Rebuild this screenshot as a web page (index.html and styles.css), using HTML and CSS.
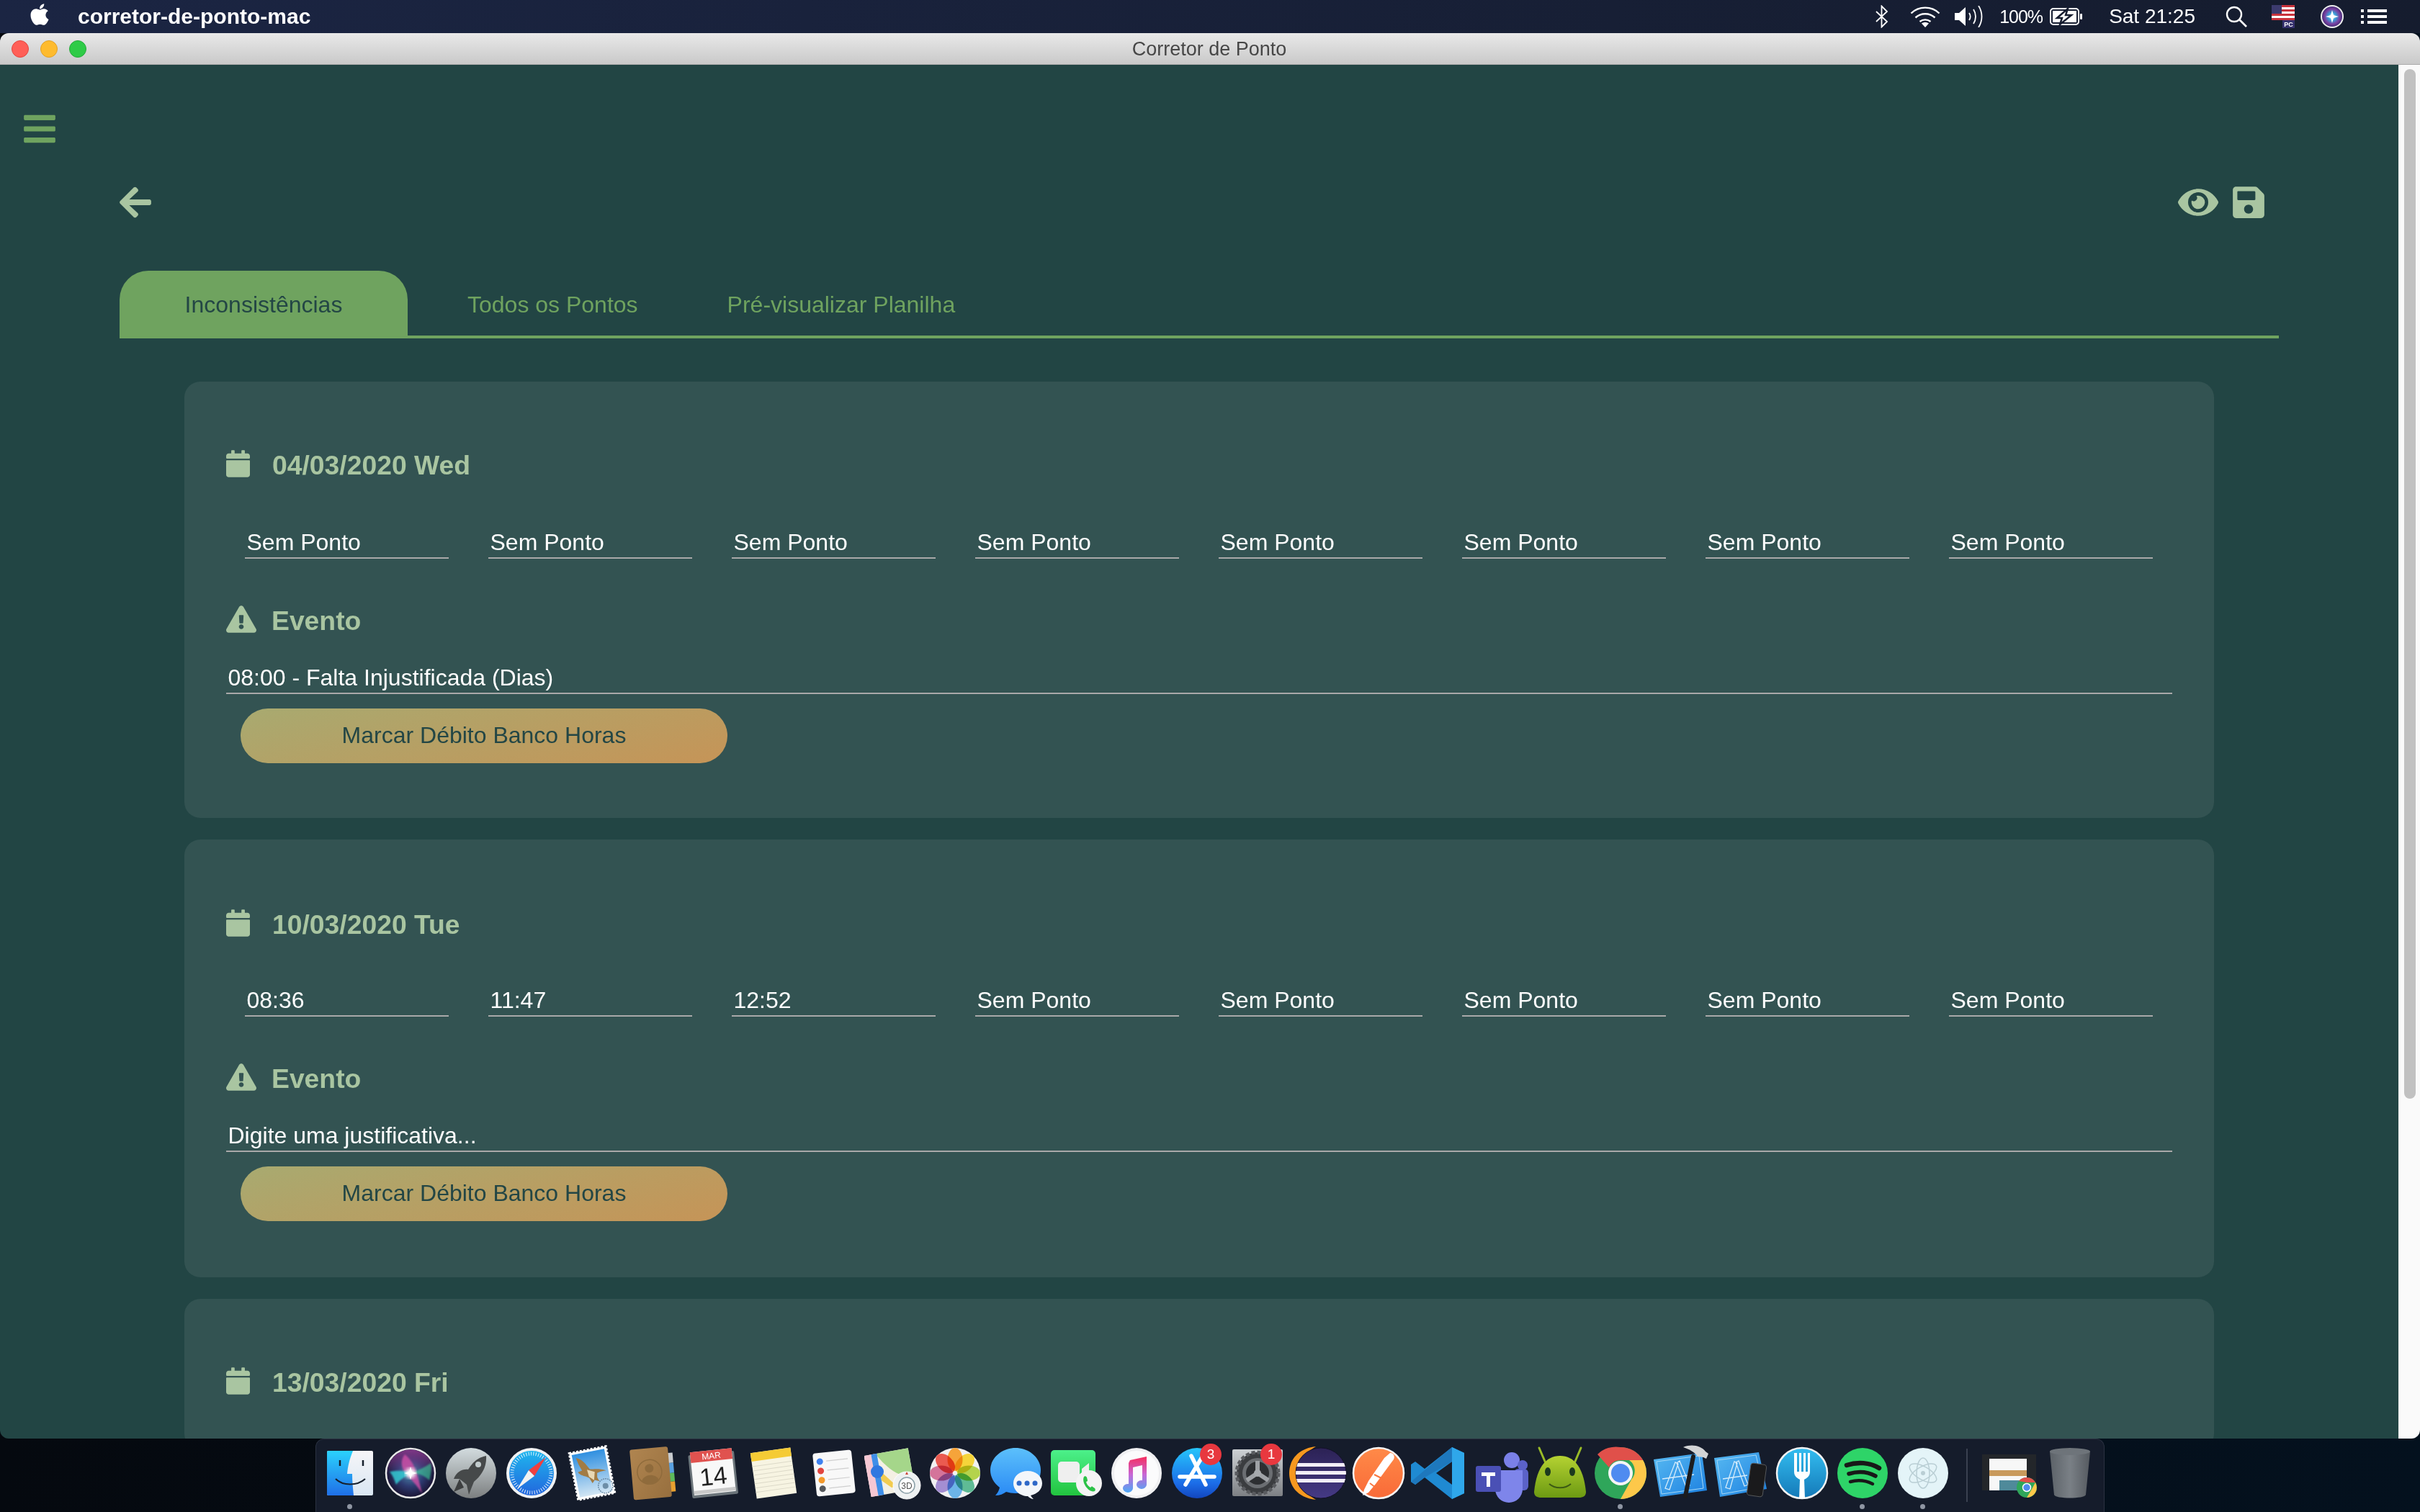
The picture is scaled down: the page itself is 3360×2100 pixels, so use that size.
FILE: index.html
```html
<!DOCTYPE html>
<html lang="pt">
<head>
<meta charset="utf-8">
<title>Corretor de Ponto</title>
<link rel="stylesheet" href="styles.css">
</head>
<body>
<header class="menubar">
  <svg class="mi apple" viewBox="0 0 384 512"><path fill="#fff" d="M318.7 268.7c-.2-36.7 16.4-64.4 50-84.8-18.8-26.9-47.2-41.7-84.7-44.6-35.5-2.8-74.3 20.7-88.5 20.7-15 0-49.4-19.7-76.4-19.7C63.3 141.2 4 184.8 4 273.5q0 39.3 14.4 81.2c12.8 36.7 59 126.7 107.2 125.2 25.2-.6 43-17.9 75.8-17.9 31.8 0 48.3 17.9 76.4 17.9 48.6-.7 90.4-82.5 102.6-119.3-65.2-30.7-61.7-90-61.7-91.9zm-56.6-164.2c27.3-32.4 24.8-61.9 24-72.5-24.1 1.4-52 16.4-67.9 34.9-17.5 19.8-27.8 44.3-25.6 71.9 26.1 2 49.9-11.4 69.5-34.3z"/></svg>
  <span class="appname">corretor-de-ponto-mac</span>
  <div class="status">
    <svg class="mi bt" viewBox="0 0 18 32"><path fill="none" stroke="#fff" stroke-width="1.800" d="M1 9l15 14-7.500 7.500V1.500L16 9 1 23"/></svg>
    <svg class="mi wifi" viewBox="0 0 42 30"><g fill="none" stroke="#fff" stroke-width="2.400"><path d="M1.500 10.500C12 0 30 0 40.500 10.500"/><path d="M7.500 16.500C15 9.500 27 9.500 34.500 16.500"/><path d="M13.500 22C18 18.500 24 18.500 28.500 22"/></g><path fill="#fff" d="M21 30l-5-5.500c3-2 7-2 10 0z"/></svg>
    <svg class="mi spk" viewBox="0 0 41 30"><path fill="#fff" d="M0 10h6l9-8v26l-9-8H0z"/><g fill="none" stroke="#fff" stroke-width="1.800"><path d="M20 10c2 3 2 7 0 10"/><path d="M26 5c4 6 4 14 0 20"/><path d="M33 0c6 9 6 21 0 30"/></g></svg>
    <span class="pct">100%</span>
    <svg class="mi batt" viewBox="0 0 46 24"><rect x="1" y="1" width="39" height="22" rx="4" fill="none" stroke="#fff" stroke-width="2"/><rect x="42" y="8" width="3" height="8" rx="1" fill="#fff"/><rect x="4" y="4" width="33" height="16" fill="#fff"/><path fill="#fff" d="M25 1L10 14h7l-3 9L30 10h-8z" stroke="#161d30" stroke-width="2.500"/></svg>
    <span class="clock">Sat 21:25</span>
    <svg class="mi search" viewBox="0 0 30 30"><circle cx="12" cy="12" r="10" fill="none" stroke="#fff" stroke-width="2.400"/><path d="M19 19l10 10" stroke="#fff" stroke-width="2.600"/></svg>
    <svg class="mi flag" viewBox="0 0 32 32"><rect width="32" height="21" fill="#fff"/><g fill="#c8323c"><rect width="32" height="3"/><rect y="6" width="32" height="3"/><rect y="12" width="32" height="3"/><rect y="18" width="32" height="3"/></g><rect width="14" height="12" fill="#3c3b6e"/><rect x="15" y="21" width="17" height="11" fill="#35316d"/><text x="23.500" y="30" class="pc">PC</text></svg>
    <svg class="mi siri" viewBox="0 0 32 32"><defs><radialGradient id="sr"><stop offset="0" stop-color="#dff"/><stop offset=".35" stop-color="#3aa0d8"/><stop offset=".7" stop-color="#7a3fa0"/><stop offset="1" stop-color="#3a2a70"/></radialGradient></defs><circle cx="16" cy="16" r="15" fill="url(#sr)" stroke="#eee" stroke-width="2"/><path d="M16 7l2 7 7 2-7 2-2 7-2-7-7-2 7-2z" fill="#fff"/></svg>
    <svg class="mi list" viewBox="0 0 36 20"><g fill="#fff"><rect width="4" height="4"/><rect y="8" width="4" height="4"/><rect y="16" width="4" height="4"/><rect x="9" width="27" height="4"/><rect x="9" y="8" width="27" height="4"/><rect x="9" y="16" width="27" height="4"/></g></svg>
  </div>
</header>

<section class="window">
  <div class="titlebar">
    <div class="lights"><i class="light red"></i><i class="light yellow"></i><i class="light green"></i></div>
    <div class="wintitle">Corretor de Ponto</div>
  </div>
  <div class="winbody">
    <main class="main">
      <svg class="bars" viewBox="0 0 448 512"><path d="M16 132h416c8.837 0 16-7.163 16-16V76c0-8.837-7.163-16-16-16H16C7.163 60 0 67.163 0 76v40c0 8.837 7.163 16 16 16zm0 160h416c8.837 0 16-7.163 16-16v-40c0-8.837-7.163-16-16-16H16c-8.837 0-16 7.163-16 16v40c0 8.837 7.163 16 16 16zm0 160h416c8.837 0 16-7.163 16-16v-40c0-8.837-7.163-16-16-16H16c-8.837 0-16 7.163-16 16v40c0 8.837 7.163 16 16 16z"/></svg>
      <div class="page">
        <div class="toolbar">
          <svg class="tool" viewBox="0 0 448 512"><path d="M257.500 445.100l-22.200 22.200c-9.400 9.400-24.600 9.400-33.900 0L7 273c-9.400-9.400-9.400-24.600 0-33.900L201.400 44.700c9.400-9.400 24.600-9.400 33.900 0l22.200 22.200c9.500 9.500 9.300 25-.4 34.300L136.600 216H424c13.300 0 24 10.700 24 24v32c0 13.300-10.700 24-24 24H136.600l120.500 114.800c9.800 9.300 10 24.800.4 34.300z"/></svg>
          <div class="tools">
            <svg class="tool eye" viewBox="0 0 576 512"><path d="M572.520 241.400C518.290 135.590 410.930 64 288 64S57.680 135.640 3.480 241.410a32.350 32.350 0 0 0 0 29.190C57.710 376.410 165.070 448 288 448s230.320-71.640 284.520-177.410a32.350 32.350 0 0 0 0-29.190zM288 400a144 144 0 1 1 144-144 143.930 143.930 0 0 1-144 144zm0-240a95.310 95.310 0 0 0-25.310 3.790 47.850 47.850 0 0 1-66.900 66.900A95.780 95.780 0 1 0 288 160z"/></svg>
            <svg class="tool" viewBox="0 0 448 512"><path d="M433.941 129.941l-83.882-83.882A48 48 0 0 0 316.118 32H48C21.490 32 0 53.490 0 80v352c0 26.510 21.490 48 48 48h352c26.510 0 48-21.490 48-48V163.882a48 48 0 0 0-14.059-33.941zM224 416c-35.346 0-64-28.654-64-64 0-35.346 28.654-64 64-64s64 28.654 64 64c0 35.346-28.654 64-64 64zm96-304.520V212c0 6.627-5.373 12-12 12H76c-6.627 0-12-5.373-12-12V108c0-6.627 5.373-12 12-12h228.520c3.183 0 6.235 1.264 8.485 3.515l3.480 3.480A11.996 11.996 0 0 1 320 111.480z"/></svg>
          </div>
        </div>
        <nav class="tabs">
          <div class="tab active">Inconsistências</div>
          <div class="tab second">Todos os Pontos</div>
          <div class="tab">Pré-visualizar Planilha</div>
        </nav>
        <div class="cards">
          <article class="card">
            <h2 class="head"><svg class="cal" viewBox="0 0 448 512"><path d="M12 192h424c6.600 0 12 5.400 12 12v260c0 26.500-21.500 48-48 48H48c-26.500 0-48-21.500-48-48V204c0-6.600 5.400-12 12-12zm436-44v-36c0-26.500-21.500-48-48-48h-48V12c0-6.600-5.400-12-12-12h-40c-6.600 0-12 5.400-12 12v52H160V12c0-6.600-5.400-12-12-12h-40c-6.600 0-12 5.400-12 12v52H48C21.500 64 0 85.500 0 112v36c0 6.600 5.400 12 12 12h424c6.600 0 12-5.400 12-12z"/></svg><span>04/03/2020 Wed</span></h2>
            <div class="times"><div class="field">Sem Ponto</div><div class="field">Sem Ponto</div><div class="field">Sem Ponto</div><div class="field">Sem Ponto</div><div class="field">Sem Ponto</div><div class="field">Sem Ponto</div><div class="field">Sem Ponto</div><div class="field">Sem Ponto</div></div>
            <h3 class="head event"><svg class="warn" viewBox="0 0 576 512"><path d="M569.517 440.013C587.975 472.007 564.806 512 527.940 512H48.054c-36.937 0-59.999-40.055-41.577-71.987L246.423 24.035c18.467-32.009 64.720-31.951 83.154 0l239.940 416zM288 354c-25.405 0-46 20.595-46 46s20.595 46 46 46 46-20.595 46-46-20.595-46-46-46zm-43.673-165.346l7.418 136c.347 6.364 5.609 11.346 11.982 11.346h48.546c6.373 0 11.635-4.982 11.982-11.346l7.418-136c.375-6.874-5.098-12.654-11.982-12.654h-63.383c-6.884 0-12.356 5.780-11.981 12.654z"/></svg><span>Evento</span></h3>
            <div class="field reason">08:00 - Falta Injustificada (Dias)</div>
            <button class="action">Marcar Débito Banco Horas</button>
          </article>
          <article class="card tall">
            <h2 class="head"><svg class="cal" viewBox="0 0 448 512"><path d="M12 192h424c6.600 0 12 5.400 12 12v260c0 26.500-21.500 48-48 48H48c-26.500 0-48-21.500-48-48V204c0-6.600 5.400-12 12-12zm436-44v-36c0-26.500-21.500-48-48-48h-48V12c0-6.600-5.400-12-12-12h-40c-6.600 0-12 5.400-12 12v52H160V12c0-6.600-5.400-12-12-12h-40c-6.600 0-12 5.400-12 12v52H48C21.500 64 0 85.500 0 112v36c0 6.600 5.400 12 12 12h424c6.600 0 12-5.400 12-12z"/></svg><span>10/03/2020 Tue</span></h2>
            <div class="times"><div class="field">08:36</div><div class="field">11:47</div><div class="field">12:52</div><div class="field">Sem Ponto</div><div class="field">Sem Ponto</div><div class="field">Sem Ponto</div><div class="field">Sem Ponto</div><div class="field">Sem Ponto</div></div>
            <h3 class="head event"><svg class="warn" viewBox="0 0 576 512"><path d="M569.517 440.013C587.975 472.007 564.806 512 527.940 512H48.054c-36.937 0-59.999-40.055-41.577-71.987L246.423 24.035c18.467-32.009 64.720-31.951 83.154 0l239.940 416zM288 354c-25.405 0-46 20.595-46 46s20.595 46 46 46 46-20.595 46-46-20.595-46-46-46zm-43.673-165.346l7.418 136c.347 6.364 5.609 11.346 11.982 11.346h48.546c6.373 0 11.635-4.982 11.982-11.346l7.418-136c.375-6.874-5.098-12.654-11.982-12.654h-63.383c-6.884 0-12.356 5.780-11.981 12.654z"/></svg><span>Evento</span></h3>
            <div class="field reason">Digite uma justificativa...</div>
            <button class="action">Marcar Débito Banco Horas</button>
          </article>
          <article class="card">
            <h2 class="head"><svg class="cal" viewBox="0 0 448 512"><path d="M12 192h424c6.600 0 12 5.400 12 12v260c0 26.500-21.500 48-48 48H48c-26.500 0-48-21.500-48-48V204c0-6.600 5.400-12 12-12zm436-44v-36c0-26.500-21.500-48-48-48h-48V12c0-6.600-5.400-12-12-12h-40c-6.600 0-12 5.400-12 12v52H160V12c0-6.600-5.400-12-12-12h-40c-6.600 0-12 5.400-12 12v52H48C21.500 64 0 85.500 0 112v36c0 6.600 5.400 12 12 12h424c6.600 0 12-5.400 12-12z"/></svg><span>13/03/2020 Fri</span></h2>
          </article>
        </div>
      </div>
    </main>
    <div class="scrollbar"><div class="thumb"></div></div>
  </div>
</section>

<footer class="dockrow">
  <div class="dock">
    <div class="cell"><svg class="ic" viewBox="0 0 84 84"><defs><linearGradient id="f1" x1="0" y1="0" x2="0" y2="1"><stop offset="0" stop-color="#2bd2fc"/><stop offset="1" stop-color="#1f6fe8"/></linearGradient><linearGradient id="f2" x1="0" y1="0" x2="0" y2="1"><stop offset="0" stop-color="#f6f6f8"/><stop offset="1" stop-color="#d9e6f3"/></linearGradient></defs><rect x="10" y="11" width="64" height="62" rx="2" fill="url(#f2)"/><path d="M12 11h34c-4 10-7 20-8 32h7c0 10 1 20 2 30H12a2 2 0 0 1-2-2V13a2 2 0 0 1 2-2z" fill="url(#f1)"/><path d="M28 24v8M60 24v8" stroke="#17202c" stroke-width="2.500"/><path d="M22 50c10 10 30 10 41 0" fill="none" stroke="#17202c" stroke-width="2.200"/></svg><i class="dot"></i></div>
    <div class="cell"><svg class="ic" viewBox="0 0 84 84"><defs><radialGradient id="s1"><stop offset="0" stop-color="#4f8fb0"/><stop offset=".55" stop-color="#2d3a70"/><stop offset="1" stop-color="#1a1433"/></radialGradient><linearGradient id="s2" x1="0" y1="0" x2="0" y2="1"><stop offset="0" stop-color="#8a3a8f" stop-opacity=".9"/><stop offset=".5" stop-color="#8a3a8f" stop-opacity="0"/></linearGradient><filter id="sb"><feGaussianBlur stdDeviation="1"/></filter><filter id="sc"><feGaussianBlur stdDeviation="2.500"/></filter></defs><circle cx="42" cy="42" r="34" fill="url(#s1)" stroke="#e8e8e8" stroke-width="2.500"/><circle cx="42" cy="42" r="32.500" fill="url(#s2)"/><g filter="url(#sb)"><path d="M34 16c8 6 14 16 18 30l6 24c-8-12-14-18-22-26-8-10-8-20-2-28z" fill="#d24fa8" opacity=".8"/><path d="M13 40c12-2 22-2 31 2-8 4-16 8-22 16-2-6-4-12-9-18z" fill="#33d3d8" opacity=".8"/><path d="M70 28c-8 6-18 10-26 14 10 0 18 4 24 10 2-8 4-16 2-24z" fill="#3fdf9f" opacity=".55"/></g><circle cx="42" cy="42" r="7" fill="#fff" filter="url(#sc)"/><path d="M42 33l2 7 7 2-7 2-2 7-2-7-7-2 7-2z" fill="#fff"/></svg></div>
    <div class="cell"><svg class="ic" viewBox="0 0 84 84"><defs><linearGradient id="l1" x1="0" y1="0" x2="0" y2="1"><stop offset="0" stop-color="#d3dcdf"/><stop offset="1" stop-color="#7c7f80"/></linearGradient></defs><circle cx="42" cy="42" r="35" fill="url(#l1)"/><path d="M63 18c1 14-5 26-17 36l-4 10-3 8-3-14-10-8-8 0c4-10 12-14 20-13 6-10 14-17 25-19z" fill="#46494a"/><circle cx="52" cy="30" r="4" fill="#c2cbcd"/><path d="M26 50l-8 18 14-6z" fill="#3d3f40"/></svg></div>
    <div class="cell"><svg class="ic" viewBox="0 0 84 84"><defs><linearGradient id="sf" x1="0" y1="0" x2="0" y2="1"><stop offset="0" stop-color="#1fb6ee"/><stop offset="1" stop-color="#2266dd"/></linearGradient></defs><circle cx="42" cy="42" r="35" fill="#f1f2f3"/><circle cx="42" cy="42" r="31" fill="url(#sf)"/><circle cx="42" cy="42" r="27" fill="none" stroke="#fff" stroke-width="5" stroke-dasharray="1 2.400" opacity=".85"/><path d="M62 20L38 38l8 8z" fill="#f04040"/><path d="M22 64l24-18-8-8z" fill="#f2f2f2"/></svg></div>
    <div class="cell"><svg class="ic" viewBox="0 0 84 84"><defs><linearGradient id="m1" x1="0" y1="0" x2="0" y2="1"><stop offset="0" stop-color="#2f8fe0"/><stop offset="1" stop-color="#d2e6f4"/></linearGradient></defs><g transform="rotate(-11 42 42)"><rect x="16" y="9" width="52" height="66" fill="#fff" stroke="#fff" stroke-width="3" stroke-dasharray="3 2"/><rect x="19" y="12" width="46" height="60" fill="url(#m1)"/><path d="M24 17c5 2 8 5 11 10l5 9c5 1 13 1 22 6-6 0-10 0-13 1l-1 6 2 6-6-3-4 4-3-8-4-3c-5-2-9-5-10-8l6-1-3-9z" fill="#a27c45"/><path d="M36 36l10 5-3 11-6-6z" fill="#e8d8b4"/><circle cx="57" cy="63" r="10" fill="none" stroke="#6d8ea8" stroke-width="1.500" stroke-dasharray="2 1"/><circle cx="57" cy="63" r="4" fill="#6d8ea8"/></g></svg></div>
    <div class="cell"><svg class="ic" viewBox="0 0 84 84"><defs><linearGradient id="c1" x1="0" y1="0" x2="1" y2="1"><stop offset="0" stop-color="#b08550"/><stop offset="1" stop-color="#976f3e"/></linearGradient></defs><g transform="rotate(-5 42 42)"><rect x="62" y="16" width="10" height="14" fill="#c9ccd0"/><rect x="62" y="30" width="10" height="14" fill="#5aa0e0"/><rect x="62" y="44" width="10" height="12" fill="#5cba5c"/><rect x="62" y="56" width="10" height="14" fill="#e8a030"/><rect x="13" y="7" width="53" height="70" rx="3" fill="url(#c1)"/><circle cx="38" cy="40" r="17" fill="none" stroke="#8f6b3c" stroke-width="1.500"/><circle cx="38" cy="35" r="6" fill="#8f6b3c"/><path d="M26 52c4-10 20-10 24 0-7 6-17 6-24 0z" fill="#8f6b3c"/></g></svg></div>
    <div class="cell"><svg class="ic" viewBox="0 0 84 84"><g transform="rotate(-6 42 42)"><rect x="10" y="14" width="64" height="60" rx="2" fill="#6b747a"/><rect x="13" y="10" width="58" height="60" fill="#f8f8f8"/><rect x="13" y="10" width="58" height="15" fill="#e0524f"/><text x="42" y="22" class="cal-mon">MAR</text><text x="42" y="58" class="cal-day">14</text><rect x="13" y="64" width="58" height="5" fill="#c9c9c9"/></g></svg></div>
    <div class="cell"><svg class="ic" viewBox="0 0 84 84"><g transform="rotate(-8 42 42)"><rect x="14" y="10" width="56" height="64" fill="#f7f4e2"/><rect x="14" y="10" width="56" height="12" fill="#f5cb35"/><g stroke="#dcd9c8" stroke-width="1"><path d="M14 29h56M14 35h56M14 41h56M14 47h56M14 53h56M14 59h56M14 65h56"/></g></g></svg></div>
    <div class="cell"><svg class="ic" viewBox="0 0 84 84"><g transform="rotate(-6 42 42)"><rect x="15" y="12" width="54" height="60" rx="4" fill="#f8f8f8"/><circle cx="24" cy="24" r="4.500" fill="#3f82f0"/><circle cx="24" cy="37" r="4.500" fill="#e2453f"/><circle cx="24" cy="50" r="4.500" fill="#f49a2c"/><circle cx="24" cy="62" r="4.500" fill="#55585c"/><path d="M33 24h30M33 37h30M33 50h30M33 62h30" stroke="#cfcfcf" stroke-width="1.200"/></g></svg></div>
    <div class="cell"><svg class="ic" viewBox="0 0 84 84"><g transform="rotate(-10 36 40)"><rect x="4" y="12" width="62" height="58" fill="#f4f0e4"/><path d="M20 12h46v40c-20-2-34-18-46-40z" fill="#a5d68a"/><path d="M4 12h14v58H4z" fill="#f6c7d3"/><path d="M14 12h8v58h-8z" fill="#3f8fe8"/><path d="M22 36l20 26h-8L22 50z" fill="#f2cc50"/></g><circle cx="18" cy="40" r="9" fill="#2f78e0"/><circle cx="59" cy="59" r="19" fill="#eef1f2" stroke="#fff"/><circle cx="59" cy="59" r="11" fill="#fff" stroke="#8ba0a8" stroke-width="1.500"/><text x="59" y="64" class="maps3d">3D</text><path d="M59 40l-2 4h4z" fill="#c43"/></svg></div>
    <div class="cell"><svg class="ic" viewBox="0 0 84 84"><circle cx="42" cy="42" r="35" fill="#f1f1f1"/><g class="petals"><ellipse cx="42" cy="23" rx="10.500" ry="16" fill="#f6a43a"/><ellipse cx="42" cy="23" rx="10.500" ry="16" fill="#f5d43a" transform="rotate(45 42 42)"/><ellipse cx="42" cy="23" rx="10.500" ry="16" fill="#b4d34c" transform="rotate(90 42 42)"/><ellipse cx="42" cy="23" rx="10.500" ry="16" fill="#5fbb95" transform="rotate(135 42 42)"/><ellipse cx="42" cy="23" rx="10.500" ry="16" fill="#6cb4e8" transform="rotate(180 42 42)"/><ellipse cx="42" cy="23" rx="10.500" ry="16" fill="#a48ed2" transform="rotate(225 42 42)"/><ellipse cx="42" cy="23" rx="10.500" ry="16" fill="#d4749a" transform="rotate(270 42 42)"/><ellipse cx="42" cy="23" rx="10.500" ry="16" fill="#ea5a50" transform="rotate(315 42 42)"/></g></svg></div>
    <div class="cell"><svg class="ic" viewBox="0 0 84 84"><defs><linearGradient id="ms" x1="0" y1="0" x2="0" y2="1"><stop offset="0" stop-color="#5cc0fb"/><stop offset="1" stop-color="#2a8af5"/></linearGradient></defs><path d="M42 7c19 0 35 14 35 31 0 18-16 32-35 32-5 0-9-1-13-2-4 3-9 5-15 5 3-3 5-7 6-11C12 56 7 47 7 38 7 21 23 7 42 7z" fill="url(#ms)"/><path d="M59 39c11 0 20 7 20 17 0 9-7 15-16 17 1 2 2 3 4 5-3 0-6-2-8-4-11 0-20-8-20-18 0-10 9-17 20-17z" fill="#f3f6fa"/><circle cx="47" cy="56" r="3.500" fill="#2f68c8"/><circle cx="58" cy="56" r="3.500" fill="#2f68c8"/><circle cx="69" cy="56" r="3.500" fill="#2f68c8"/></svg></div>
    <div class="cell"><svg class="ic" viewBox="0 0 84 84"><defs><linearGradient id="ft" x1="0" y1="0" x2="0" y2="1"><stop offset="0" stop-color="#4cf08a"/><stop offset="1" stop-color="#22c43f"/></linearGradient></defs><rect x="7" y="10" width="62" height="63" rx="5" fill="url(#ft)"/><rect x="17" y="26" width="30" height="29" rx="5" fill="#efefef"/><path d="M50 36l10-8v26l-10-8z" fill="#efefef"/><circle cx="60" cy="56" r="18" fill="#f4f4f4"/><path d="M53 47c1-1 3-1 4 1l1 4c0 1-1 2-2 2 1 4 3 6 6 8 1-1 2-2 3-1l3 2c1 1 1 3 0 4-8 3-19-12-15-20z" fill="#2cc247"/></svg></div>
    <div class="cell"><svg class="ic" viewBox="0 0 84 84"><defs><linearGradient id="it" x1="0" y1="0" x2="0" y2="1"><stop offset="0" stop-color="#f62d5e"/><stop offset=".5" stop-color="#c867d6"/><stop offset="1" stop-color="#4ca8f5"/></linearGradient></defs><circle cx="42" cy="42" r="35" fill="#f0f0f2"/><circle cx="42" cy="42" r="31" fill="#fbfbfc"/><path d="M33 24l23-5v39a7 6 0 1 1-6-6V31l-13 3v29a7 6 0 1 1-6-6V28z" fill="url(#it)"/></svg></div>
    <div class="cell"><svg class="ic" viewBox="0 0 84 84"><defs><linearGradient id="as" x1="0" y1="0" x2="0" y2="1"><stop offset="0" stop-color="#26c6fb"/><stop offset=".7" stop-color="#1c6de8"/><stop offset="1" stop-color="#1246bd"/></linearGradient></defs><circle cx="42" cy="42" r="35" fill="url(#as)"/><g stroke="#fff" stroke-width="5.500" stroke-linecap="round" fill="none"><path d="M50 18L26 58"/><path d="M34 18l20 40"/><path d="M18 47h48"/></g></svg><b class="badge">3</b></div>
    <div class="cell"><svg class="ic" viewBox="0 0 84 84"><defs><linearGradient id="sp" x1="0" y1="0" x2="0" y2="1"><stop offset="0" stop-color="#cdd1d4"/><stop offset="1" stop-color="#7d8084"/></linearGradient></defs><rect x="7" y="9" width="70" height="65" rx="2" fill="url(#sp)"/><circle cx="42" cy="42" r="29" fill="#3b3d40" stroke="#5a5c60" stroke-width="5" stroke-dasharray="5 3"/><circle cx="42" cy="42" r="21" fill="#6b6e72"/><circle cx="42" cy="42" r="16" fill="#2d2f32"/><path d="M42 42V25M42 42L27 52M42 42l15 10" stroke="#9fa2a6" stroke-width="6"/><circle cx="42" cy="42" r="5" fill="#a7aaae"/></svg><b class="badge">1</b></div>
    <div class="cell"><svg class="ic" viewBox="0 0 84 84"><defs><linearGradient id="ec" x1="0" y1="0" x2="0" y2="1"><stop offset="0" stop-color="#2c2255"/><stop offset="1" stop-color="#453a85"/></linearGradient><clipPath id="ecc"><circle cx="46" cy="42" r="35"/></clipPath></defs><path d="M39 5C12 8 2 26 2 42s10 34 37 37C24 70 16 58 16 42s8-28 23-37z" fill="#f6981f"/><circle cx="46" cy="42" r="35" fill="url(#ec)" stroke="#14102a" stroke-width="1"/><g clip-path="url(#ecc)" fill="#f2eef8"><rect x="10" y="28" width="72" height="5"/><rect x="10" y="39" width="72" height="5"/><rect x="10" y="50" width="72" height="5"/></g></svg></div>
    <div class="cell"><svg class="ic" viewBox="0 0 84 84"><defs><linearGradient id="pm" x1="0" y1="0" x2="0" y2="1"><stop offset="0" stop-color="#ff8a48"/><stop offset="1" stop-color="#f96a38"/></linearGradient></defs><circle cx="42" cy="42" r="35" fill="url(#pm)" stroke="#f6f6f6" stroke-width="2.500"/><path d="M58 14c5 0 7 5 5 9l-3 4-22 30-10 12-8 4 2-8 6-12 22-32z" fill="#fff"/><path d="M36 44l12 6M30 56l8 6" stroke="#f9753e" stroke-width="2"/></svg></div>
    <div class="cell"><svg class="ic" viewBox="0 0 84 84"><path d="M60 6l17 8v56l-17 8L22 48 9 58l-6-4v-24l6-4 13 10z" fill="#1f8ad2"/><path d="M60 6l17 8v56l-17 8z" fill="#2fa7ea"/><path d="M60 26L38 42l22 16z" fill="#151c2b"/><path d="M60 6v20L22 48 9 58l-6-4z" fill="#1e78bd"/></svg></div>
    <div class="cell"><svg class="ic" viewBox="0 0 84 84"><circle cx="59" cy="24" r="11" fill="#7a80e8"/><circle cx="74" cy="31" r="7" fill="#5b62c8"/><rect x="62" y="36" width="20" height="30" rx="6" fill="#5b62c8"/><path d="M36 38h38v26a19 19 0 0 1-38 0z" fill="#7e85ea"/><rect x="9" y="32" width="35" height="36" rx="3" fill="#4a50b5"/><path d="M17 41h19v5h-7v15h-5V46h-7z" fill="#fff"/></svg></div>
    <div class="cell"><svg class="ic" viewBox="0 0 84 84"><defs><linearGradient id="an" x1="0" y1="0" x2="0" y2="1"><stop offset="0" stop-color="#b5d232"/><stop offset="1" stop-color="#6c9a12"/></linearGradient></defs><path d="M22 28L13 7M62 28l9-21" stroke="#99bb27" stroke-width="3" stroke-linecap="round"/><path d="M42 18c22 0 33 20 36 50 0 6-4 8-10 8H16c-6 0-10-2-10-8 3-30 14-50 36-50z" fill="url(#an)"/><ellipse cx="25" cy="40" rx="4" ry="6" fill="#1c3a1e"/><ellipse cx="59" cy="40" rx="4" ry="6" fill="#1c3a1e"/><path d="M27 57c8 7 22 7 30 0" fill="none" stroke="#3c5a14" stroke-width="2"/></svg></div>
    <div class="cell"><svg class="ic" viewBox="0 0 84 84"><circle cx="42" cy="42" r="36" fill="#2fa65a"/><path d="M42 6a36 36 0 0 1 31.200 18H42a18 18 0 0 0-16 10L10 16A36 36 0 0 1 42 6z" fill="#e0504a"/><path d="M73.200 24A36 36 0 0 1 42 78l15-27a18 18 0 0 0-3-27z" fill="#fdc84a"/><circle cx="42" cy="42" r="17" fill="#f5f5f5"/><circle cx="42" cy="42" r="13" fill="#4f8bf0"/></svg><i class="dot"></i></div>
    <div class="cell"><svg class="ic" viewBox="0 0 84 84"><defs><linearGradient id="xc" x1="0" y1="0" x2="1" y2="1"><stop offset="0" stop-color="#58baf2"/><stop offset="1" stop-color="#1b7fe0"/></linearGradient></defs><path d="M4 23l67-9 7 52-65 9z" fill="url(#xc)"/><path d="M8 26l59-8 6 45-58 8z" fill="none" stroke="#a5d8f7" stroke-width="1"/><g fill="none" stroke="#d4ecfb" stroke-width="1.300"><path d="M20 63L34 27l4 2-12 36zM36 28l13 33 5-2-14-34zM16 50l44-6"/></g><path d="M59 19L48 74" stroke="#1c1c1e" stroke-width="6" stroke-linecap="round"/><path d="M45 6c12-5 25-2 31 6l4 3-3 7-4-2-8-1c-4-6-11-10-20-13z" fill="#d2d4d6"/></svg></div>
    <div class="cell"><svg class="ic" viewBox="0 0 84 84"><defs><linearGradient id="xd" x1="0" y1="0" x2="1" y2="1"><stop offset="0" stop-color="#58baf2"/><stop offset="1" stop-color="#1b7fe0"/></linearGradient></defs><path d="M4 21l62-8 11 51-65 11z" fill="url(#xd)"/><path d="M8 24l54-7 10 44-57 10z" fill="none" stroke="#a5d8f7" stroke-width="1"/><g fill="none" stroke="#d4ecfb" stroke-width="1.300"><path d="M20 62L32 26l4 2-10 36zM34 27l12 33 5-2-13-33zM16 50l34-5"/></g><rect x="52" y="29" width="22" height="45" rx="4" fill="#1a1a1c" stroke="#55575a" transform="rotate(8 63 52)"/></svg></div>
    <div class="cell"><svg class="ic" viewBox="0 0 84 84"><defs><linearGradient id="fk" x1="0" y1="0" x2="0" y2="1"><stop offset="0" stop-color="#33bdf0"/><stop offset="1" stop-color="#1479b8"/></linearGradient></defs><circle cx="42" cy="42" r="35" fill="url(#fk)" stroke="#f2f2f2" stroke-width="2.500"/><path d="M31 14v26c0 7 5 9 8 11l-1 26h8l-1-26c3-2 8-4 8-11V14h-3v26h-3V14h-3v26h-3V14h-3v26h-3V14z" fill="#fff"/></svg></div>
    <div class="cell"><svg class="ic" viewBox="0 0 84 84"><circle cx="42" cy="42" r="35" fill="#2ed468"/><g fill="none" stroke="#181818" stroke-linecap="round"><path d="M20 31c15-5 32-4 45 4" stroke-width="6.500"/><path d="M23 43c13-4 26-3 37 3" stroke-width="5.500"/><path d="M25 54c11-3 21-2 31 3" stroke-width="4.500"/></g></svg><i class="dot"></i></div>
    <div class="cell"><svg class="ic" viewBox="0 0 84 84"><circle cx="42" cy="42" r="35" fill="#e4f4f8"/><g fill="none" stroke="#b9ced4" stroke-width="1.500"><ellipse cx="42" cy="42" rx="21" ry="9" transform="rotate(30 42 42)"/><ellipse cx="42" cy="42" rx="21" ry="9" transform="rotate(90 42 42)"/><ellipse cx="42" cy="42" rx="21" ry="9" transform="rotate(150 42 42)"/></g><circle cx="42" cy="42" r="3" fill="#b9ced4"/></svg><i class="dot"></i></div>
    <div class="sep"></div>
    <div class="cell"><svg class="ic" viewBox="0 0 84 84"><rect x="4" y="16" width="75" height="50" fill="#23262a"/><rect x="14" y="22" width="52" height="44" fill="#f7f7f7"/><rect x="14" y="38" width="52" height="8" fill="#c99a5c"/><rect x="28" y="52" width="38" height="14" fill="#4f8a9a"/><circle cx="66" cy="62" r="14" fill="#2fa65a"/><path d="M66 48a14 14 0 0 1 12 7H66l-11-2a14 14 0 0 1 11-5z" fill="#e0504a"/><path d="M78 55a14 14 0 0 1-12 21l6-10z" fill="#fdc84a"/><circle cx="66" cy="62" r="5.500" fill="#4f8bf0" stroke="#fff" stroke-width="1.500"/></svg></div>
    <div class="cell"><svg class="ic" viewBox="0 0 84 84"><defs><linearGradient id="tr" x1="0" y1="0" x2="1" y2="0"><stop offset="0" stop-color="#5c6268"/><stop offset=".5" stop-color="#7a8086"/><stop offset="1" stop-color="#555a60"/></linearGradient></defs><path d="M14 12c0-4 56-4 56 0l-6 60c-1 6-43 6-44 0z" fill="url(#tr)"/><ellipse cx="42" cy="12" rx="28" ry="5" fill="#6e747a"/></svg></div>
  </div>
</footer>
</body>
</html>
```

FILE: styles.css
```css
* { box-sizing: border-box; }
html, body { margin: 0; padding: 0; }
body {
  width: 3360px;
  height: 2100px;
  overflow: hidden;
  display: flex;
  flex-direction: column;
  background: linear-gradient(90deg, #05090f, #04111e);
  font-family: "Liberation Sans", Arial, sans-serif;
}
svg { display: block; flex: none; }

/* menu bar */
.menubar {
  height: 46px;
  flex: none;
  display: flex;
  align-items: center;
  padding: 0 46px 0 42px;
  color: #fff;
  background: linear-gradient(90deg, #1b2543, #151c2e);
}
.apple { width: 26px; height: 34px; margin-top: -6px; }
.appname { margin-left: 40px; font-size: 30px; font-weight: 700; }
.status { margin-left: auto; display: flex; align-items: center; }
.bt { width: 18px; height: 32px; }
.wifi { width: 42px; height: 30px; margin-left: 30px; }
.spk { width: 41px; height: 30px; margin-left: 20px; }
.pct { margin-left: 21px; width: 61px; font-size: 25px; letter-spacing: -1px; white-space: nowrap; }
.batt { width: 46px; height: 24px; margin-left: 9px; }
.clock { margin-left: 36px; font-size: 28px; }
.search { width: 30px; height: 30px; margin-left: 42px; }
.flag { width: 32px; height: 32px; margin-left: 34px; }
.pc { font: 700 9px "Liberation Sans", sans-serif; fill: #fff; text-anchor: middle; }
.siri { width: 32px; height: 32px; margin-left: 36px; }
.list { width: 36px; height: 20px; margin-left: 24px; }

/* window */
.window {
  height: 1952px;
  flex: none;
  display: flex;
  flex-direction: column;
  overflow: hidden;
  border-radius: 12px;
}
.titlebar {
  height: 44px;
  flex: none;
  position: relative;
  display: flex;
  align-items: center;
  justify-content: center;
  background: linear-gradient(#e9e9e9, #c9c9c9);
  border-bottom: 1px solid #ababab;
}
.lights { position: absolute; left: 16px; top: 10px; display: flex; gap: 16px; }
.light { width: 24px; height: 24px; border-radius: 50%; }
.red { background: #ff5f57; border: 1px solid #e2463f; }
.yellow { background: #febb2e; border: 1px solid #e0a028; }
.green { background: #2ecb47; border: 1px solid #25a93b; }
.wintitle { font-size: 27px; color: #474747; padding: 2px 2px 0 0; }
.winbody { flex: 1; display: flex; min-height: 0; }
.main { flex: 1; overflow: hidden; background: #224544; padding-top: 64px; }
.scrollbar {
  width: 30px;
  flex: none;
  padding: 6px 6px 0 8px;
  background: #fafafa;
  border-left: 2px solid #f0f0f0;
}
.thumb { margin-left: -2px; width: 16px; height: 1430px; border-radius: 8px; background: #c1c1c1; }

.bars { width: 44px; height: 50px; margin-left: 33px; fill: #6fa35f; }
.page { margin: 52px 166px 0; }
.toolbar { display: flex; justify-content: space-between; padding-right: 20px; }
.tools { display: flex; gap: 20px; }
.tool { width: 44px; height: 50px; fill: #a9c5a1; }
.tool.eye { width: 56px; }

.tabs { margin-top: 70px; display: flex; border-bottom: 4px solid #6fa35f; height: 94px; }
.tab {
  height: 94px;
  padding: 27px 62px 0;
  font-size: 32px;
  line-height: 40px;
  color: #6fa35f;
}
.tab.active {
  width: 400px;
  padding: 27px 0 0;
  text-align: center;
  color: #234645;
  background: #6fa35f;
  border-radius: 40px 40px 0 0;
}
.tab.second { margin-left: 21px; }

.cards { margin: 60px 90px 0; display: flex; flex-direction: column; gap: 30px; }
.card {
  background: #335352;
  border-radius: 22px;
  padding: 95px 58px 76px;
}
.card.tall { padding: 97px 58px 78px; }
.card.tall .times { margin-top: 68px; }
.head {
  margin: 0;
  height: 38px;
  display: flex;
  align-items: center;
  font-size: 37.3px;
  line-height: 38px;
  font-weight: 700;
  color: #a9c5a1;
}
.head span { position: relative; top: 2px; }
.cal { width: 33px; height: 38px; margin-right: 31px; fill: #a9c5a1; }
.warn { width: 42px; height: 38px; margin-right: 21px; fill: #a9c5a1; }
.event { margin-top: 65px; }
.times {
  margin: 70px 0 0 26px;
  display: grid;
  grid-template-columns: repeat(8, 283px);
  column-gap: 55px;
}
.field {
  height: 43px;
  padding-left: 2.500px;
  font-size: 32px;
  line-height: 41px;
  color: #fff;
  border-bottom: 2px solid #a9a9a9;
}
.reason { margin-top: 42px; width: 2702px; }
.action {
  display: block;
  margin: 20px 0 0 20px;
  width: 676px;
  height: 76px;
  border: 0;
  border-radius: 38px;
  padding: 0 0 2px;
  font: 32px "Liberation Sans", sans-serif;
  color: #234645;
  background: linear-gradient(165deg, #a8aa70, #c69457);
}

/* dock */
.dockrow { flex: 1; display: flex; justify-content: center; }
.dock {
  width: 2484px;
  display: flex;
  padding: 5px 5px 0;
  background: #151c2b;
  border: 1px solid #2a3140;
  border-bottom: 0;
  border-radius: 12px 12px 0 0;
}
.cell { width: 84px; height: 96px; flex: none; position: relative; }
.ic { width: 84px; height: 84px; }
.dot {
  position: absolute;
  left: 38px;
  top: 85px;
  width: 7px;
  height: 7px;
  border-radius: 50%;
  background: #8f96a3;
}
.badge {
  position: absolute;
  left: 46px;
  top: 1px;
  width: 30px;
  height: 30px;
  border-radius: 50%;
  background: #e8383f;
  color: #fff;
  font-size: 19px;
  font-weight: 400;
  line-height: 30px;
  text-align: center;
}
.petals { isolation: isolate; }
.petals ellipse { mix-blend-mode: multiply; }
.sep { width: 36px; flex: none; margin-top: 8px; height: 74px; background: linear-gradient(#3a4150, #3a4150) 18px 0 / 2px 100% no-repeat; }
.cal-mon { font: 12px "Liberation Sans", sans-serif; fill: #fff; text-anchor: middle; }
.cal-day { font: 34px "Liberation Sans", sans-serif; fill: #222; text-anchor: middle; }
.maps3d { font: 12px "Liberation Sans", sans-serif; fill: #555; text-anchor: middle; }
```
